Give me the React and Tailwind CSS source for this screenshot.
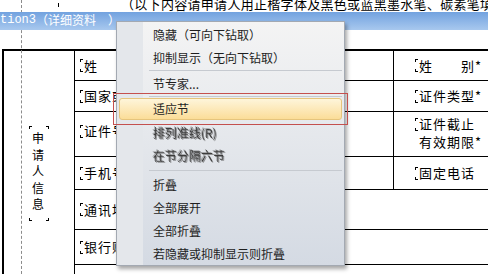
import React from "react";

const menuItems = [
    { text: "隐藏（可向下钻取）" },
    { text: "抑制显示（无向下钻取）" },
    { sep: "h-[3px]" },
    { text: "节专家..." },
    { sep: "h-[3px]" },
    { text: "适应节", active: true },
    { text: "排列准线(R)", ghost: true },
    { text: "在节分隔六节", ghost: true },
    { sep: "h-[6px]" },
    { text: "折叠" },
    { text: "全部展开" },
    { text: "全部折叠" },
    { text: "若隐藏或抑制显示则折叠" },
];

// little corner marks the report designer draws around text objects
function Label({ children, className = "" }) {
    return (
        <span className={"inline-flex items-center " + className}>
            <span className="flex h-[13px] w-[3px] flex-col justify-between">
                <span className="h-[3px] border-l border-t border-black" />
                <span className="h-[3px] border-l border-b border-black" />
            </span>
            <span className="ml-[1px] tracking-[1px]">{children}</span>
        </span>
    );
}

function ContextMenu() {
    return (
        <div className="absolute left-[116px] top-[21px] z-20 w-[229px] border border-[#a3a9b2] bg-[linear-gradient(to_right,#e4e7eb_26px,transparent_26px),linear-gradient(to_bottom,#f4f4f4,#d4dae3)] pt-[1px] text-[12px] text-[#1e1e1e] shadow-[2px_3px_4px_rgba(0,0,0,0.35)]">
            {menuItems.map((item, i) => {
                if (item.sep) {
                    return (
                        <div key={i} className={"flex items-center pl-[32px] pr-[2px] " + item.sep}>
                            <div className="h-px w-full bg-[#c6cad0]" />
                        </div>
                    );
                }
                if (item.active) {
                    return (
                        <div key={i} className="h-[23px] px-[2px]">
                            <div className="flex h-[22px] items-center rounded-[3px] border border-[#e6c57c] bg-gradient-to-b from-[#fef5da] to-[#fbdd98] pl-[33px]">
                                {item.text}
                            </div>
                        </div>
                    );
                }
                return (
                    <div
                        key={i}
                        className={
                            "flex h-[23px] items-center pl-[36px] " +
                            (item.ghost
                                ? "text-[#3c3c3c] blur-[0.5px] [text-shadow:1px_1px_0_rgba(60,60,60,0.5),-1px_-1px_0_rgba(60,60,60,0.35)]"
                                : "")
                        }
                    >
                        {item.text}
                    </div>
                );
            })}
        </div>
    );
}

export default function App() {
    return (
        <div className="relative h-[274px] w-[488px] overflow-hidden bg-white font-['Noto_Sans_CJK_SC',sans-serif] text-black">
            {/* guide line */}
            <div className="absolute left-[21px] top-0 h-full border-l border-dashed border-[#8c8c8c]" />

            {/* clipped note above the section */}
            <div className="flex h-[12px] overflow-hidden">
                <span className="ml-[58px] mt-[3px] h-[4px] w-[3px] border-b border-l border-black" />
                <p className="ml-[62px] -mt-[3px] whitespace-nowrap text-[13px] leading-[13px] tracking-[0.3px]">
                    （以下内容请申请人用正楷字体及黑色或蓝黑墨水笔、碳素笔填写）
                </p>
            </div>

            {/* section band */}
            <div className="relative z-10 flex h-[18px] items-center bg-gradient-to-b from-[#72a2df] to-[#a8c8ee] pb-[2px] text-white">
                <span className="font-['Liberation_Mono',monospace] text-[12px]">tion3</span>
                <span className="text-[12px]">（详细资料　）</span>
            </div>

            <div className="h-[19px]" />

            {/* form table */}
            <div className="ml-[2px] flex border-l-2 border-t-2 border-black text-[13px] leading-[18px]">
                <div className="w-[71px] shrink-0 border-r border-black pl-[25px] pt-[75px]">
                    <div className="flex w-[20px] flex-col">
                        <div className="flex justify-between">
                            <span className="h-[3px] w-[3px] border-l border-t border-black" />
                            <span className="h-[3px] w-[3px] border-r border-t border-black" />
                        </div>
                        <div className="flex flex-col items-center pr-[2px] pt-[1px] text-[12px] leading-[16.5px]">
                            <span>申</span>
                            <span>请</span>
                            <span>人</span>
                            <span>信</span>
                            <span>息</span>
                        </div>
                        <div className="mt-[5px] flex justify-between">
                            <span className="h-[3px] w-[3px] border-b border-l border-black" />
                            <span className="h-[3px] w-[3px] border-b border-r border-black" />
                        </div>
                    </div>
                </div>

                <div className="flex grow flex-col">
                    <div className="flex h-[30px] border-b border-black">
                        <div className="flex w-[319px] items-center border-r border-black pl-[5px]">
                            <Label>姓</Label>
                        </div>
                        <div className="flex items-center pl-[21px]">
                            <Label>姓　　别*</Label>
                        </div>
                    </div>
                    <div className="flex h-[31px] border-b border-black">
                        <div className="flex w-[319px] items-center border-r border-black pl-[5px]">
                            <Label>国家或地区</Label>
                        </div>
                        <div className="flex items-center pl-[21px]">
                            <Label>证件类型*</Label>
                        </div>
                    </div>
                    <div className="flex h-[45px] border-b border-black">
                        <div className="flex w-[319px] items-start border-r border-black pl-[5px] pt-[10px]">
                            <Label>证件号码*</Label>
                        </div>
                        <div className="flex flex-col pl-[21px] pt-[3px]">
                            <Label>证件截止</Label>
                            <span className="pl-[4px] tracking-[1px]">有效期限*</span>
                        </div>
                    </div>
                    <div className="flex h-[33px] border-b border-black">
                        <div className="flex w-[319px] items-center border-r border-black pl-[5px]">
                            <Label>手机号码</Label>
                        </div>
                        <div className="flex items-center pl-[21px]">
                            <Label>固定电话</Label>
                        </div>
                    </div>
                    <div className="flex h-[40px] items-center border-b border-black pl-[5px]">
                        <Label>通讯地址</Label>
                    </div>
                    <div className="flex h-[35px] items-center border-b border-black pl-[5px]">
                        <Label>银行账户</Label>
                    </div>
                    <div className="h-[20px]" />
                </div>
            </div>

            <ContextMenu />

            {/* annotation around the chosen command */}
            <div className="absolute left-[113px] top-[93px] z-30 h-[32px] w-[235px] border border-[#c4504e]" />
        </div>
    );
}
